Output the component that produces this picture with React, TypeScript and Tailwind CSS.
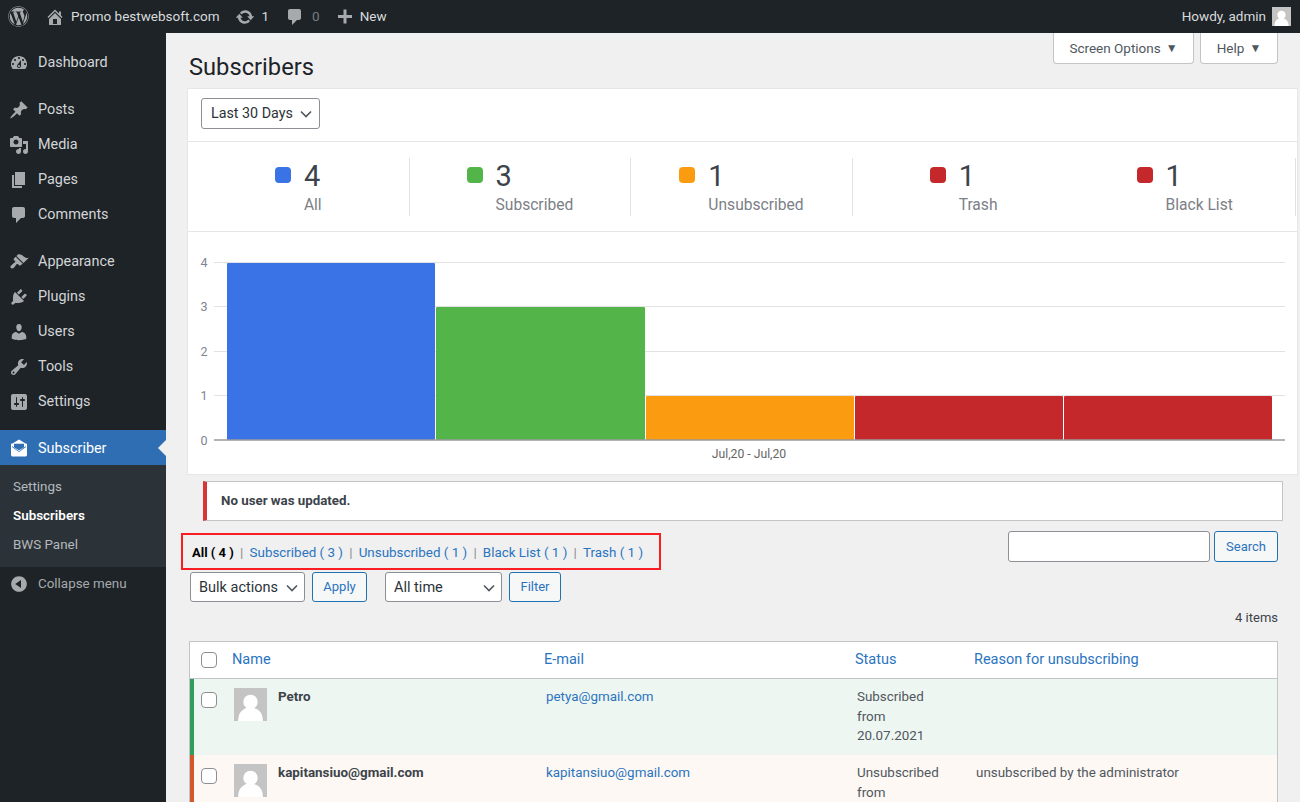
import type { ReactNode } from "react";
import { FaWordpress } from "react-icons/fa";

const dash = {
  home: "M16 8.5l1.53 1.53-1.06 1.06L10 4.62l-6.47 6.47-1.06-1.06L10 2.5l4 4v-2h2v4zm-6-2.46l6 5.99V18H4v-5.97zM12 17v-5H8v5h4z",
  update:
    "M10.2 3.28c3.53 0 6.43 2.61 6.92 6h2.08l-3.5 4-3.5-4h2.32c-.45-1.97-2.21-3.45-4.32-3.45-1.45 0-2.73.71-3.54 1.78L4.95 5.66C6.23 4.2 8.11 3.28 10.2 3.28zm-.4 13.44c-3.52 0-6.43-2.61-6.92-6H.8l3.5-4c1.17 1.33 2.33 2.67 3.5 4H5.48c.45 1.97 2.21 3.45 4.32 3.45 1.45 0 2.73-.71 3.54-1.78l1.71 1.95c-1.28 1.46-3.15 2.38-5.25 2.38z",
  comment: "M5 2h9c1.1 0 2 .9 2 2v7c0 1.1-.9 2-2 2h-2l-5 5v-5H5c-1.1 0-2-.9-2-2V4c0-1.1.9-2 2-2z",
  plus: "M17 8v3h-5.5v5.5h-3V11H3V8h5.5V2.5h3V8H17z",
  dashboard:
    "M3.76 16h12.48c1.1-1.37 1.76-3.11 1.76-5 0-4.42-3.58-8-8-8s-8 3.58-8 8c0 1.89.66 3.63 1.76 5zM10 4c.55 0 1 .45 1 1s-.45 1-1 1-1-.45-1-1 .45-1 1-1zM6 6c.55 0 1 .45 1 1s-.45 1-1 1-1-.45-1-1 .45-1 1-1zm8 0c.55 0 1 .45 1 1s-.45 1-1 1-1-.45-1-1 .45-1 1-1zm-5.37 5.55L12 7v6c0 1.1-.9 2-2 2s-2-.9-2-2c0-.57.24-1.08.63-1.45zM4 10c.55 0 1 .45 1 1s-.45 1-1 1-1-.45-1-1 .45-1 1-1zm12 0c.55 0 1 .45 1 1s-.45 1-1 1-1-.45-1-1 .45-1 1-1zm-5 3c0-.55-.45-1-1-1s-1 .45-1 1 .45 1 1 1 1-.45 1-1z",
  post: "M10.44 3.02l1.82-1.82 6.36 6.35-1.83 1.82c-1.05-.68-2.48-.57-3.41.36l-.75.75c-.92.93-1.04 2.35-.35 3.41l-1.83 1.82-2.41-2.41-2.8 2.79c-.42.42-3.38 2.71-3.8 2.29s1.86-3.39 2.28-3.81l2.79-2.79L4.1 9.36l1.83-1.82c1.05.69 2.48.57 3.4-.36l.75-.75c.93-.92 1.05-2.35.36-3.41z",
  media:
    "M13 11V4c0-.55-.45-1-1-1h-1.67L9 1H5L3.67 3H2c-.55 0-1 .45-1 1v7c0 .55.45 1 1 1h10c.55 0 1-.45 1-1zM7 4.5c1.38 0 2.5 1.12 2.5 2.5S8.38 9.5 7 9.5 4.5 8.38 4.5 7 5.62 4.5 7 4.5zM14 6h5v10.5c0 1.38-1.12 2.5-2.5 2.5S14 17.88 14 16.5s1.12-2.5 2.5-2.5c.17 0 .34.02.5.05V9h-3V6zm-4 8.05V13h2v3.5c0 1.38-1.12 2.5-2.5 2.5S7 17.88 7 16.5 8.12 14 9.5 14c.17 0 .34.02.5.05z",
  page: "M6 15V2h10v13H6zm-1 1h8v2H3V5h2v11z",
  appearance:
    "M14.48 11.06L7.41 3.99l1.5-1.5c.5-.56 2.3-.47 3.51.32 1.21.8 1.43 1.28 2.91 2.1 1.18.64 2.45 1.26 4.45.85zm-.71.71L6.7 4.7 4.93 6.47c-.39.39-.39 1.02 0 1.41l1.06 1.06c.39.39.39 1.03 0 1.42-.6.6-1.43 1.11-2.21 1.69-.35.26-.7.53-1.01.84C1.43 13.71.96 15.12 1.85 16s2.3.43 3.23-.5c.31-.31.58-.66.84-1.01.58-.78 1.09-1.61 1.69-2.21.39-.39 1.03-.39 1.42 0l1.06 1.06c.39.39 1.02.39 1.41 0z",
  plugins:
    "M13.11 4.36L9.87 7.6 8 5.73l3.24-3.24c.35-.34 1.05-.2 1.56.32.52.51.66 1.21.31 1.55zm-8 1.77l.91-1.12 9.01 9.01-1.19.84c-.71.71-2.63 1.16-3.82 1.16H6.14L4.9 17.26c-.59.59-1.54.59-2.12 0-.59-.58-.59-1.53 0-2.12l1.24-1.24v-3.88c0-1.13.4-3.19 1.09-3.89zm7.26 3.97l3.24-3.24c.34-.35 1.04-.21 1.55.31.52.51.66 1.21.31 1.55l-3.24 3.25z",
  users:
    "M10 9.25c-2.27 0-2.73-3.44-2.73-3.44C7 4.02 7.82 2 9.97 2c2.16 0 2.98 2.02 2.71 3.81 0 0-.41 3.44-2.68 3.44zm0 2.57L12.72 10c2.39 0 4.52 2.33 4.52 4.53v2.49s-3.65 1.13-7.24 1.13c-3.65 0-7.24-1.13-7.24-1.13v-2.49c0-2.25 1.94-4.48 4.47-4.48z",
  tools:
    "M16.68 9.77c-1.34 1.34-3.3 1.67-4.95.99l-5.41 6.52c-.99.99-2.59.99-3.58 0s-.99-2.59 0-3.57l6.52-5.42c-.68-1.65-.35-3.61.99-4.95 1.28-1.28 3.12-1.62 4.72-1.06l-2.89 2.89 2.82 2.82 2.86-2.87c.53 1.58.18 3.39-1.08 4.65zM3.81 16.21c.4.39 1.04.39 1.43 0 .4-.4.4-1.04 0-1.43-.39-.4-1.03-.4-1.43 0-.39.39-.39 1.03 0 1.43z",
  settings:
    "M18 16V4c0-1.1-.9-2-2-2H4c-1.1 0-2 .9-2 2v12c0 1.1.9 2 2 2h12c1.1 0 2-.9 2-2zM8 11h1c.55 0 1 .45 1 1s-.45 1-1 1H8v1.5c0 .28-.22.5-.5.5s-.5-.22-.5-.5V13H6c-.55 0-1-.45-1-1s.45-1 1-1h1V5.5c0-.28.22-.5.5-.5s.5.22.5.5V11zm5-2h-1c-.55 0-1-.45-1-1s.45-1 1-1h1V5.5c0-.28.22-.5.5-.5s.5.22.5.5V7h1c.55 0 1 .45 1 1s-.45 1-1 1h-1v5.5c0 .28-.22.5-.5.5s-.5-.22-.5-.5V9z",
  mail: "M10 1.5L3.5 5.5H2.6L2 6.2V17c0 .8.6 1.4 1.4 1.4h13.2c.8 0 1.4-.6 1.4-1.4V6.2l-.6-.7h-.9L10 1.5zM5 5.8h10v3.4l-5 3-5-3V5.8zM3 8l7 5.2L17 8v1L10 14 3 9V8z",
  collapse: "M10 2.16c4.33 0 7.84 3.51 7.84 7.84s-3.51 7.84-7.84 7.84S2.16 14.33 2.16 10 5.71 2.16 10 2.16zm2 11.72V6.12L6.18 9.97z",
};

function Dash({ d, className }: { d: string; className: string }) {
  return (
    <svg viewBox="0 0 20 20" className={className} fill="currentColor" fillRule="evenodd">
      <path d={d} />
    </svg>
  );
}

function MenuItem({ icon, label, active }: { icon: string; label: string; active?: boolean }) {
  return (
    <div
      className={`relative flex h-[35px] items-center pl-[9px] text-[14.4px] ${
        active ? "bg-[#2f6eb3] text-white" : "text-[#d3d5d7]"
      }`}
    >
      <Dash d={icon} className={`h-[20px] w-[20px] ${active ? "text-white" : "text-[#a7aaad]"}`} />
      <span className={`ml-[9px] ${active ? "pt-[3px]" : "pt-[1px]"}`}>{label}</span>
      {active && (
        <span className="absolute right-0 top-[10px] h-0 w-0 border-y-[8px] border-r-[8px] border-y-transparent border-r-[#f0f0f1]" />
      )}
    </div>
  );
}

function Sidebar() {
  return (
    <aside className="flex w-[166px] shrink-0 flex-col bg-[#1d2327] pt-[12px]">
      <MenuItem icon={dash.dashboard} label="Dashboard" />
      <div className="h-[12px]" />
      <MenuItem icon={dash.post} label="Posts" />
      <MenuItem icon={dash.media} label="Media" />
      <MenuItem icon={dash.page} label="Pages" />
      <MenuItem icon={dash.comment} label="Comments" />
      <div className="h-[12px]" />
      <MenuItem icon={dash.appearance} label="Appearance" />
      <MenuItem icon={dash.plugins} label="Plugins" />
      <MenuItem icon={dash.users} label="Users" />
      <MenuItem icon={dash.tools} label="Tools" />
      <MenuItem icon={dash.settings} label="Settings" />
      <div className="h-[11px]" />
      <MenuItem icon={dash.mail} label="Subscriber" active />
      <div className="flex h-[102px] flex-col justify-center gap-[10px] bg-[#2c3338] pb-[2px] pl-[13px] text-[13.4px] leading-[19px] text-[#b4b9be]">
        <span>Settings</span>
        <span className="font-semibold text-white">Subscribers</span>
        <span>BWS Panel</span>
      </div>
      <div className="flex h-[34px] items-center pl-[9px] text-[13.4px] text-[#a7aaad]">
        <Dash d={dash.collapse} className="h-[20px] w-[20px]" />
        <span className="ml-[9px]">Collapse menu</span>
      </div>
    </aside>
  );
}

function TopBar() {
  return (
    <header className="flex h-[33px] items-center bg-[#1d2327] text-[13.5px] text-[#d8dadc]">
      <FaWordpress className="ml-[8px] h-[21px] w-[21px] text-[#a7aaad]" />
      <Dash d={dash.home} className="ml-[16px] h-[20px] w-[20px] text-[#a7aaad]" />
      <span className="ml-[6px]">Promo bestwebsoft.com</span>
      <Dash d={dash.update} className="ml-[15px] h-[20px] w-[20px] text-[#a7aaad]" />
      <span className="ml-[7px]">1</span>
      <Dash d={dash.comment} className="ml-[16px] h-[20px] w-[20px] text-[#a7aaad]" />
      <span className="ml-[7px] text-[#787c82]">0</span>
      <Dash d={dash.plus} className="ml-[15px] h-[20px] w-[20px] text-[#a7aaad]" />
      <span className="ml-[5px]">New</span>
      <span className="ml-auto">Howdy, admin</span>
      <span className="ml-[6px] mr-[9px] flex h-[19px] w-[19px] items-end justify-center overflow-hidden bg-[#c4c4c4]">
        <Avatar />
      </span>
    </header>
  );
}

function Avatar() {
  return (
    <svg viewBox="0 0 32 32" className="h-full w-full" fill="#fff">
      <circle cx="16" cy="13.5" r="7" />
      <path d="M4 32c0-8.5 5-13 12-13s12 4.500 12 13z" />
    </svg>
  );
}

function Chevron({ className }: { className: string }) {
  return (
    <svg viewBox="0 0 12 8" className={className} fill="none" stroke="currentColor" strokeWidth="1.6">
      <path d="M1 1.5l5 5 5-5" />
    </svg>
  );
}

function Select({ label, className }: { label: string; className: string }) {
  return (
    <div
      className={`flex items-center justify-between whitespace-nowrap rounded-[3px] border border-[#8c8f94] bg-white text-[#2c3338] ${className}`}
    >
      <span>{label}</span>
      <Chevron className="h-[8px] w-[12px] text-[#50575e]" />
    </div>
  );
}

function OutlineButton({ children, className }: { children: ReactNode; className: string }) {
  return (
    <div
      className={`flex items-center justify-center rounded-[3px] border border-[#2271b1] bg-[#f6f7f7] text-[13px] text-[#2a74bf] ${className}`}
    >
      {children}
    </div>
  );
}

const stats = [
  { n: 4, label: "All", color: "bg-[#3a73e5]", divider: true },
  { n: 3, label: "Subscribed", color: "bg-[#53b44a]", divider: true },
  { n: 1, label: "Unsubscribed", color: "bg-[#fb9c10]", divider: true },
  { n: 1, label: "Trash", color: "bg-[#c4282b]", divider: false },
  { n: 1, label: "Black List", color: "bg-[#c4282b]", divider: true },
];

function Stats() {
  return (
    <div className="flex h-[90px] items-start border-b border-[#e6e6e6] pt-[16px]">
      {stats.map((s) => (
        <div
          key={s.label}
          className={`flex h-[58px] w-[221.6px] justify-center ${s.divider ? "border-r border-[#e2e2e2]" : ""}`}
        >
          <span className={`mt-[9px] h-[16px] w-[16px] rounded-[4px] ${s.color}`} />
          <div className="ml-[13px]">
            <div className="text-[29px] leading-[36px] text-[#3c434a]">{s.n}</div>
            <div className="mt-[1px] text-[15.6px] leading-[20px] text-[#7c8087]">{s.label}</div>
          </div>
        </div>
      ))}
    </div>
  );
}

function Chart() {
  const bars = [
    { x: 39, y: 31, w: 208, fill: "#3a73e5" },
    { x: 248, y: 75, w: 209, fill: "#53b44a" },
    { x: 458, y: 164, w: 208, fill: "#fb9c10" },
    { x: 667, y: 164, w: 208, fill: "#c4282b" },
    { x: 876, y: 164, w: 208, fill: "#c4282b" },
  ];
  const ticks = [
    { v: 4, y: 30.5 },
    { v: 3, y: 74.5 },
    { v: 2, y: 119.5 },
    { v: 1, y: 163.5 },
    { v: 0, y: 208 },
  ];
  return (
    <svg viewBox="0 0 1109 242" className="block h-[242px] w-[1109px]" fontFamily="Roboto, sans-serif">
      {ticks.map((t) => (
        <g key={t.v}>
          {t.v > 0 && <line x1="26" x2="1097" y1={t.y} y2={t.y} stroke="#e2e2e2" />}
          <text x="16" y={t.y + 4.5} textAnchor="middle" fontSize="12.5" fill="#7f8490">
            {t.v}
          </text>
        </g>
      ))}
      {bars.map((b) => (
        <rect key={b.x} x={b.x} y={b.y} width={b.w} height={208 - b.y} fill={b.fill} rx="1" />
      ))}
      <line x1="26" x2="1097" y1="208" y2="208" stroke="#9a9a9a" strokeWidth="1.5" />
      <text x="561" y="226" textAnchor="middle" fontSize="12.2" fill="#666">
        Jul,20 - Jul,20
      </text>
    </svg>
  );
}

function Filters() {
  const links = ["Subscribed ( 3 )", "Unsubscribed ( 1 )", "Black List ( 1 )", "Trash ( 1 )"];
  return (
    <div className="ml-[15px] mt-[12px] flex items-start justify-between pr-[22px]">
      <div className="flex h-[37px] w-[480px] items-center border-2 border-[#fa1d24] pl-[9px] pt-[3px] text-[13.4px] text-[#2a74bf]">
        <span className="text-[13px] font-bold text-black">All ( 4 )</span>
        {links.map((l) => (
          <span key={l} className="flex items-center">
            <span className="mx-[6.2px] text-[#8a8a8a]">|</span>
            <span>{l}</span>
          </span>
        ))}
      </div>
      <div className="-mt-[2px] flex gap-[4px]">
        <div className="h-[31px] w-[202px] rounded-[3px] border border-[#8c8f94] bg-white" />
        <OutlineButton className="h-[31px] w-[64px]">Search</OutlineButton>
      </div>
    </div>
  );
}

function Check() {
  return <span className="block h-[16px] w-[16px] rounded-[4px] border border-[#8c8f94] bg-white" />;
}

type Row = {
  name: string;
  email: string;
  status: string[];
  reason?: string;
  rowClass: string;
};

const rows: Row[] = [
  {
    name: "Petro",
    email: "petya@gmail.com",
    status: ["Subscribed", "from", "20.07.2021"],
    rowClass: "bg-[#eef6f2] border-[#2e9e5b]",
  },
  {
    name: "kapitansiuo@gmail.com",
    email: "kapitansiuo@gmail.com",
    status: ["Unsubscribed", "from"],
    reason: "unsubscribed by the administrator",
    rowClass: "bg-[#fdf8f4] border-[#d5562b]",
  },
];

function Table() {
  return (
    <div className="ml-[23px] mr-[22px] mt-[14px] border border-[#c3c4c7] bg-white text-[13.4px]">
      <div className="flex h-[37px] items-center border-b border-[#c3c4c7] pl-[11px] text-[14.5px] text-[#2a74bf]">
        <Check />
        <span className="ml-[15px] w-[312px]">Name</span>
        <span className="w-[311px]">E-mail</span>
        <span className="w-[119px]">Status</span>
        <span>Reason for unsubscribing</span>
      </div>
      {rows.map((r) => (
        <div key={r.name} className={`flex h-[76px] border-l-4 pl-[7px] ${r.rowClass}`}>
          <div className="pt-[13px]">
            <Check />
          </div>
          <div className="ml-[17px] mt-[9px] h-[33px] w-[33px] bg-[#c4c4c4]">
            <Avatar />
          </div>
          <div className="ml-[11px] w-[268px] pt-[8px] font-bold text-[#3c434a]">{r.name}</div>
          <div className="w-[311px] pt-[8px] text-[#2a74bf]">{r.email}</div>
          <div className="w-[119px] pt-[8px] leading-[19.7px] text-[#50575e]">
            {r.status.map((s) => (
              <div key={s}>{s}</div>
            ))}
          </div>
          <div className="pt-[8px] text-[#50575e]">{r.reason}</div>
        </div>
      ))}
    </div>
  );
}

export default function App() {
  return (
    <div className="flex h-[802px] w-[1300px] flex-col overflow-hidden bg-[#f0f0f1] font-['Roboto',sans-serif]">
      <TopBar />
      <div className="flex min-h-0 flex-1">
        <Sidebar />
        <main className="min-w-0 flex-1">
          <div className="relative h-[55px]">
            <h1 className="pl-[23px] pt-[20px] text-[23.7px] leading-[29px] text-[#1d2327]">Subscribers</h1>
            <div className="absolute right-[22px] top-0 flex gap-[6px] text-[13.5px] text-[#50575e]">
              <div className="flex h-[31px] w-[141px] items-center justify-center gap-[4px] rounded-b-[4px] border border-t-0 border-[#c3c4c7] bg-white">
                Screen Options <span className="ml-[1px] text-[12px]">▼</span>
              </div>
              <div className="flex h-[31px] w-[78px] items-center justify-center gap-[4px] rounded-b-[4px] border border-t-0 border-[#c3c4c7] bg-white">
                Help <span className="ml-[1px] text-[12px]">▼</span>
              </div>
            </div>
          </div>
          <section className="ml-[21px] w-[1111px] border border-[#e6e6e6] bg-white">
            <div className="flex h-[53px] items-center border-b border-[#e6e6e6] pb-[3px] pl-[13px]">
              <Select label="Last 30 Days" className="h-[31px] w-[119px] pl-[9px] pr-[7px] text-[14.3px]" />
            </div>
            <Stats />
            <Chart />
          </section>
          <div className="ml-[37px] mr-[17px] mt-[6px] flex h-[40px] items-center border border-l-4 border-[#c3c4c7] border-l-[#d63638] bg-white pl-[14px] text-[13.3px] font-bold text-[#3c434a]">
            No user was updated.
          </div>
          <Filters />
          <div className="ml-[24px] mt-[2px] flex items-center text-[14.5px]">
            <Select label="Bulk actions" className="h-[30px] w-[115px] pl-[8px] pr-[6px] pt-[1px]" />
            <OutlineButton className="ml-[7px] h-[30px] w-[55px]">Apply</OutlineButton>
            <Select label="All time" className="ml-[18px] h-[30px] w-[117px] pl-[8px] pr-[6px] pt-[1px]" />
            <OutlineButton className="ml-[7px] h-[30px] w-[52px]">Filter</OutlineButton>
          </div>
          <div className="mr-[22px] mt-[6px] text-right text-[13px] leading-[19px] text-[#3c434a]">4 items</div>
          <Table />
        </main>
      </div>
    </div>
  );
}
